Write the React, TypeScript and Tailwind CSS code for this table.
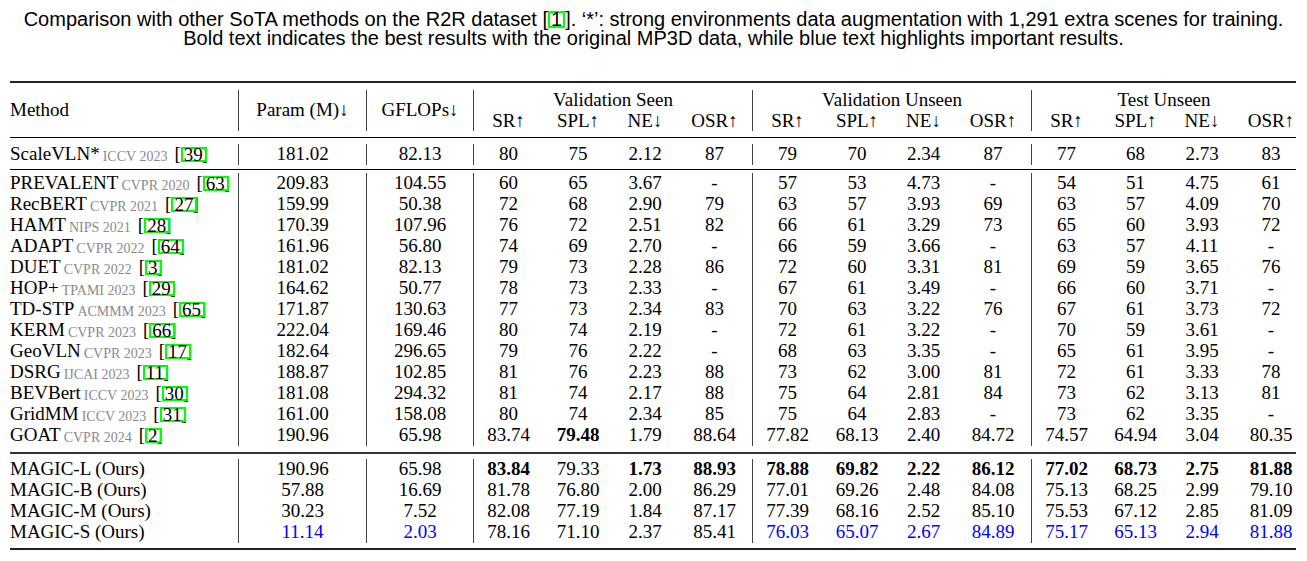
import React from "react";

type V = string;

const SEP = [false, true, true, true, false, false, false, true, false, false, false, true, false, false, false];

function Ref({ n }: { n: string }) {
  return (
    <>
      <span className="ml-[7px]">[</span>
      <span className="inline-block border-2 border-[#00ff00] leading-[11px] pl-[1px] pr-[2px] relative top-[1px]">{n}</span>
      <span className="-ml-[5px]">]</span>
    </>
  );
}

function Method({ name, venue, refn }: { name: string; venue?: string; refn?: string }) {
  return (
    <span className="whitespace-nowrap">
      <span>{name}</span>
      {venue && <span className="text-[14px] text-[#8a8a8a] ml-[3px] relative top-[1px]">{venue}</span>}
      {refn && <Ref n={refn} />}
    </span>
  );
}

function Cell({ i, v }: { i: number; v: V }) {
  let text = v;
  let extra = "";
  if (v.startsWith("*")) {
    text = v.slice(1);
    extra = "font-bold";
  } else if (v.startsWith("~")) {
    text = v.slice(1);
    extra = "text-[#0000ff]";
  }
  return (
    <div
      className={
        "h-[21px] flex items-center justify-center whitespace-nowrap " +
        (SEP[i] ? "border-l border-[#444] " : "") +
        (i === 14 ? "pl-[12px] " : "") +
        extra
      }
    >
      {text}
    </div>
  );
}

const GRID =
  "grid grid-cols-[228px_128px_107px_70px_70px_64px_75px_70px_70px_63px_76px_70px_69px_64px_62px]";

function Row({ m, vals }: { m: React.ReactNode; vals: V[] }) {
  return (
    <div className={GRID}>
      <div className="h-[21px] flex items-center">{m}</div>
      {vals.map((v, k) => (
        <Cell key={k} i={k + 1} v={v} />
      ))}
    </div>
  );
}

const main: [string, string, string, V[]][] = [
  ["PREVALENT", "CVPR 2020", "63", ["209.83", "104.55", "60", "65", "3.67", "-", "57", "53", "4.73", "-", "54", "51", "4.75", "61"]],
  ["RecBERT", "CVPR 2021", "27", ["159.99", "50.38", "72", "68", "2.90", "79", "63", "57", "3.93", "69", "63", "57", "4.09", "70"]],
  ["HAMT", "NIPS 2021", "28", ["170.39", "107.96", "76", "72", "2.51", "82", "66", "61", "3.29", "73", "65", "60", "3.93", "72"]],
  ["ADAPT", "CVPR 2022", "64", ["161.96", "56.80", "74", "69", "2.70", "-", "66", "59", "3.66", "-", "63", "57", "4.11", "-"]],
  ["DUET", "CVPR 2022", "3", ["181.02", "82.13", "79", "73", "2.28", "86", "72", "60", "3.31", "81", "69", "59", "3.65", "76"]],
  ["HOP+", "TPAMI 2023", "29", ["164.62", "50.77", "78", "73", "2.33", "-", "67", "61", "3.49", "-", "66", "60", "3.71", "-"]],
  ["TD-STP", "ACMMM 2023", "65", ["171.87", "130.63", "77", "73", "2.34", "83", "70", "63", "3.22", "76", "67", "61", "3.73", "72"]],
  ["KERM", "CVPR 2023", "66", ["222.04", "169.46", "80", "74", "2.19", "-", "72", "61", "3.22", "-", "70", "59", "3.61", "-"]],
  ["GeoVLN", "CVPR 2023", "17", ["182.64", "296.65", "79", "76", "2.22", "-", "68", "63", "3.35", "-", "65", "61", "3.95", "-"]],
  ["DSRG", "IJCAI 2023", "11", ["188.87", "102.85", "81", "76", "2.23", "88", "73", "62", "3.00", "81", "72", "61", "3.33", "78"]],
  ["BEVBert", "ICCV 2023", "30", ["181.08", "294.32", "81", "74", "2.17", "88", "75", "64", "2.81", "84", "73", "62", "3.13", "81"]],
  ["GridMM", "ICCV 2023", "31", ["161.00", "158.08", "80", "74", "2.34", "85", "75", "64", "2.83", "-", "73", "62", "3.35", "-"]],
  ["GOAT", "CVPR 2024", "2", ["190.96", "65.98", "83.74", "*79.48", "1.79", "88.64", "77.82", "68.13", "2.40", "84.72", "74.57", "64.94", "3.04", "80.35"]],
];

const ours: [string, V[]][] = [
  ["MAGIC-L (Ours)", ["190.96", "65.98", "*83.84", "79.33", "*1.73", "*88.93", "*78.88", "*69.82", "*2.22", "*86.12", "*77.02", "*68.73", "*2.75", "*81.88"]],
  ["MAGIC-B (Ours)", ["57.88", "16.69", "81.78", "76.80", "2.00", "86.29", "77.01", "69.26", "2.48", "84.08", "75.13", "68.25", "2.99", "79.10"]],
  ["MAGIC-M (Ours)", ["30.23", "7.52", "82.08", "77.19", "1.84", "87.17", "77.39", "68.16", "2.52", "85.10", "75.53", "67.12", "2.85", "81.09"]],
  ["MAGIC-S (Ours)", ["~11.14", "~2.03", "78.16", "71.10", "2.37", "85.41", "~76.03", "~65.07", "~2.67", "~84.89", "~75.17", "~65.13", "~2.94", "~81.88"]],
];

const subs = ["SR↑", "SPL↑", "NE↓", "OSR↑"];

function Header() {
  return (
    <div className={GRID + " grid-rows-[20.5px_20.5px]"}>
      <div className="row-span-2 flex items-center">Method</div>
      <div className="row-span-2 flex items-center justify-center border-l border-[#444]">Param (M)↓</div>
      <div className="row-span-2 flex items-center justify-center border-l border-[#444]">GFLOPs↓</div>
      <div className="col-span-4 flex items-center justify-center border-l border-[#444]">Validation Seen</div>
      <div className="col-span-4 flex items-center justify-center border-l border-[#444]">Validation Unseen</div>
      <div className="col-span-4 flex items-center justify-center border-l border-[#444]">Test Unseen</div>
      {[0, 1, 2].map((g) =>
        subs.map((s, k) => {
          const i = 3 + g * 4 + k;
          return (
            <div
              key={i}
              className={
                "flex items-center justify-center whitespace-nowrap " +
                (SEP[i] ? "border-l border-[#444] " : "") +
                (i === 14 ? "pl-[12px]" : "")
              }
            >
              {s}
            </div>
          );
        })
      )}
    </div>
  );
}

export default function App() {
  return (
    <div className="w-[1307px] h-[561px] bg-white text-black overflow-hidden">
      <div className="pt-[10px] text-center font-['Liberation_Sans',Arial,sans-serif] text-[20px] leading-[19px]">
        <div>
          Comparison with other SoTA methods on the R2R dataset [
          <span className="inline-block border-2 border-[#00ff00] leading-[13px] px-[1px]">1</span>]. ‘*’: strong environments data augmentation with 1,291 extra scenes for training.
        </div>
        <div>Bold text indicates the best results with the original MP3D data, while blue text highlights important results.</div>
      </div>
      <div className="ml-[10px] w-[1286px] mt-[33px] font-['Liberation_Serif','Times_New_Roman',serif] text-[19px]">
        <div className="h-[2px] bg-[#222]" />
        <div className="pt-[7px] pb-[6px]">
          <Header />
        </div>
        <div className="h-px bg-black" />
        <div className="pt-[6px] pb-[4px]">
          <Row
            m={<Method name="ScaleVLN*" venue="ICCV 2023" refn="39" />}
            vals={["181.02", "82.13", "80", "75", "2.12", "87", "79", "70", "2.34", "87", "77", "68", "2.73", "83"]}
          />
        </div>
        <div className="h-px bg-black" />
        <div className="pt-[3px] pb-[6px]">
          {main.map(([n, v, r, vals]) => (
            <Row key={n} m={<Method name={n} venue={v} refn={r} />} vals={vals} />
          ))}
        </div>
        <div className="h-[2px] bg-[#333]" />
        <div className="pt-[5px] pb-[5px]">
          {ours.map(([n, vals]) => (
            <Row key={n} m={<Method name={n} />} vals={vals} />
          ))}
        </div>
        <div className="h-[2px] bg-[#222]" />
      </div>
    </div>
  );
}
